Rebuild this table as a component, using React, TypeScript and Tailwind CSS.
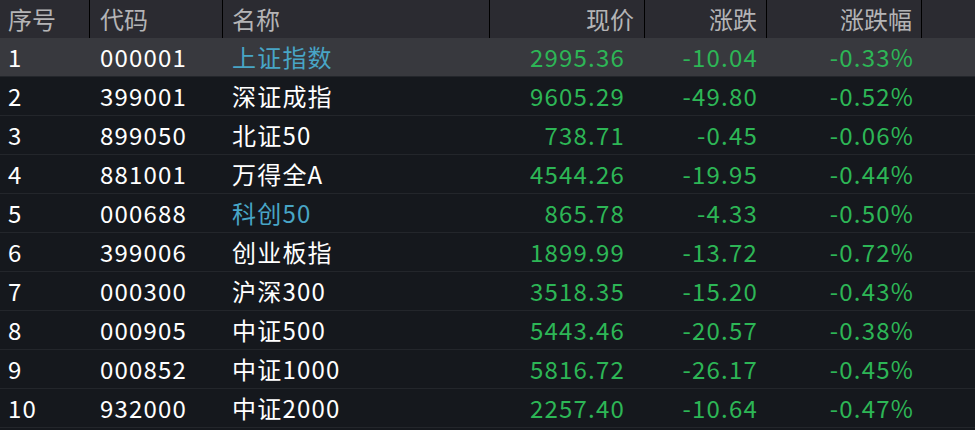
import React from "react";

type Row = {
  id: number;
  code: string;
  name: string;
  price: string;
  change: string;
  pct: string;
  link?: boolean;
};

const rows: Row[] = [
  { id: 1, code: "000001", name: "上证指数", price: "2995.36", change: "-10.04", pct: "-0.33%", link: true },
  { id: 2, code: "399001", name: "深证成指", price: "9605.29", change: "-49.80", pct: "-0.52%" },
  { id: 3, code: "899050", name: "北证50", price: "738.71", change: "-0.45", pct: "-0.06%" },
  { id: 4, code: "881001", name: "万得全A", price: "4544.26", change: "-19.95", pct: "-0.44%" },
  { id: 5, code: "000688", name: "科创50", price: "865.78", change: "-4.33", pct: "-0.50%", link: true },
  { id: 6, code: "399006", name: "创业板指", price: "1899.99", change: "-13.72", pct: "-0.72%" },
  { id: 7, code: "000300", name: "沪深300", price: "3518.35", change: "-15.20", pct: "-0.43%" },
  { id: 8, code: "000905", name: "中证500", price: "5443.46", change: "-20.57", pct: "-0.38%" },
  { id: 9, code: "000852", name: "中证1000", price: "5816.72", change: "-26.17", pct: "-0.45%" },
  { id: 10, code: "932000", name: "中证2000", price: "2257.40", change: "-10.64", pct: "-0.47%" },
];

const cols = "grid grid-cols-[90px_133px_267px_155px_122px_155px_1fr]";

export default function App() {
  return (
    <div
      className="w-[975px] h-[430px] overflow-hidden bg-[#15181d] text-[24px] leading-none"
      style={{ fontFamily: '"Noto Sans CJK SC", "Noto Sans", sans-serif' }}
    >
      {/* Header */}
      <div className={`${cols} h-[38px] bg-[#2b2b31] text-[#b4b4b6]`}>
        <div className="flex items-center pl-2 border-r border-black">序号</div>
        <div className="flex items-center pl-[10px] border-r border-black">代码</div>
        <div className="flex items-center pl-[9px] border-r border-black">名称</div>
        <div className="flex items-center justify-end pr-[10px] border-r border-black">现价</div>
        <div className="flex items-center justify-end pr-[9px] border-r border-black">涨跌</div>
        <div className="flex items-center justify-end pr-[9px] border-r border-black">涨跌幅</div>
        <div />
      </div>

      {/* Rows */}
      {rows.map((r) => (
        <div
          key={r.id}
          className={`${cols} h-[39px] border-b border-[#23262b] tracking-[1.2px] ${
            r.id === 1 ? "bg-[#38393e]" : "bg-[#15181d]"
          }`}
        >
          <div className="flex items-center pl-2 text-white">{r.id}</div>
          <div className="flex items-center pl-[10px] text-white">{r.code}</div>
          <div className={`flex items-center pl-[9px] ${r.link ? "text-[#48a5c6]" : "text-white"}`}>
            {r.name}
          </div>
          <div className="flex items-center justify-end pr-[20px] text-[#2db656]">{r.price}</div>
          <div className="flex items-center justify-end pr-[9px] text-[#2db656]">{r.change}</div>
          <div className="flex items-center justify-end pr-[8px] text-[#2db656]">{r.pct}</div>
          <div />
        </div>
      ))}
    </div>
  );
}
